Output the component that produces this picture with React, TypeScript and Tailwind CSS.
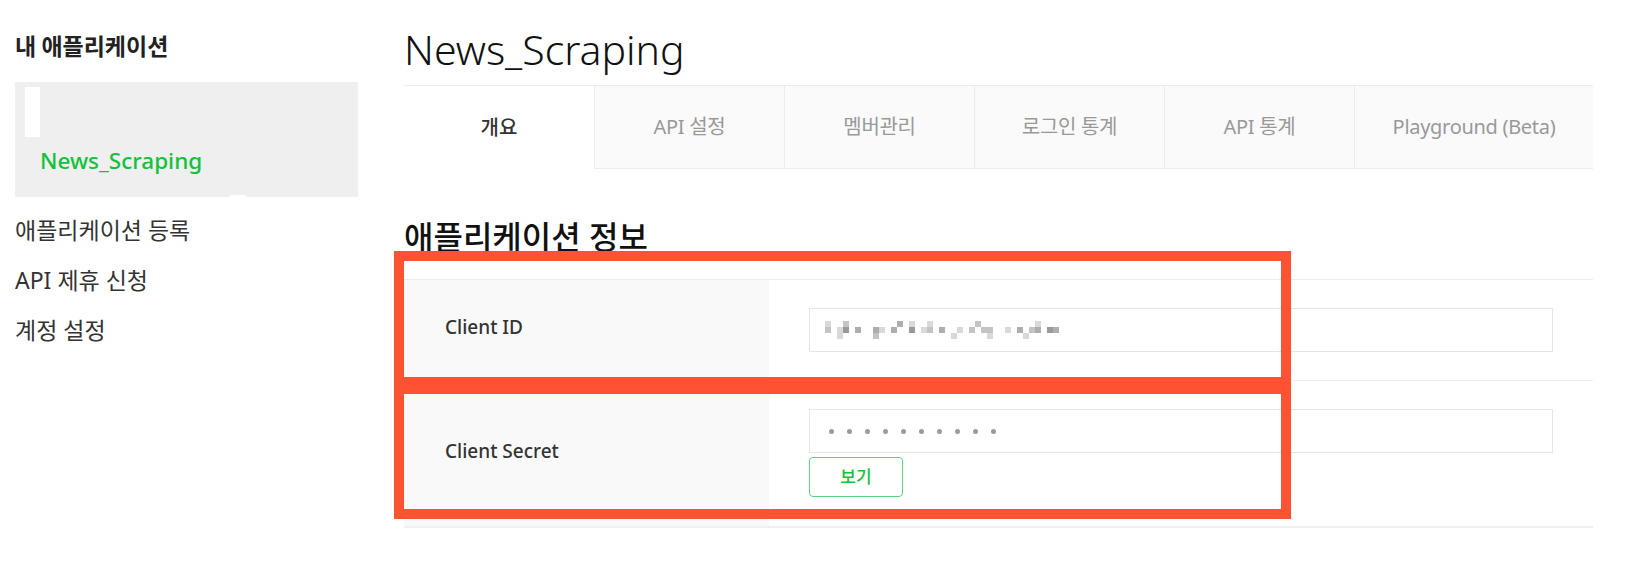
import React from "react";

const tabs = [
  { label: "개요", w: "w-[190px]", active: true },
  { label: "API 설정", w: "w-[190px]" },
  { label: "멤버관리", w: "w-[190px]" },
  { label: "로그인 통계", w: "w-[190px]" },
  { label: "API 통계", w: "w-[190px]" },
  { label: "Playground (Beta)", w: "w-[239px]" },
];

const mosaicRows = [
  "..1..2........3.1..1.......2.........1.....",
  "..2.14.3..31.3..4.12.3..1.2.22..1.3.23.43..",
  "....1.....2............1.....1.....1.......",
];
const shades: Record<string, string> = {
  "1": "#d9d9d9",
  "2": "#c4c4c4",
  "3": "#aeaeae",
  "4": "#9a9a9a",
};

function Mosaic() {
  const rects: React.ReactNode[] = [];
  mosaicRows.forEach((row, r) => {
    row.split("").forEach((ch, c) => {
      if (ch !== ".") {
        rects.push(
          <rect key={`${r}-${c}`} x={c * 6} y={r * 6} width={6} height={6} fill={shades[ch]} />
        );
      }
    });
  });
  return (
    <svg width={258} height={18} viewBox="0 0 258 18" className="block">
      {rects}
    </svg>
  );
}

export default function App() {
  return (
    <div className="relative flex w-[1642px] h-[562px] bg-white overflow-hidden font-['Noto_Sans','Noto_Sans_CJK_KR',sans-serif] text-[#333]">
      {/* Sidebar */}
      <aside className="ml-[15px] w-[343px] pt-[30px] shrink-0">
        <div className="text-[23px] leading-[30px] font-bold text-[#222] font-['Noto_Sans_CJK_KR','Noto_Sans',sans-serif]">
          내 애플리케이션
        </div>
        <div className="relative mt-[22px] h-[115px] bg-[#efefef] pt-[5px] pl-[10px]">
          <div className="w-[15px] h-[50px] bg-white" />
          <div className="mt-[9px] ml-[15px] text-[22.5px] leading-[30px] font-medium text-[#13c13b]">
            News_Scraping
          </div>
          <div className="absolute bottom-0 left-[215px] w-[16px] h-[2px] bg-white" />
        </div>
        <div className="mt-[8px] text-[23px] text-[#333]">
          <div className="h-[50px] leading-[50px]">애플리케이션 등록</div>
          <div className="h-[50px] leading-[50px]">API 제휴 신청</div>
          <div className="h-[50px] leading-[50px]">계정 설정</div>
        </div>
      </aside>

      {/* Main */}
      <main className="ml-[46px] w-[1189px] pt-[21px]">
        <h1 className="h-[56px] leading-[56px] text-[41px] font-light text-[#111] mb-[8px]">News_Scraping</h1>
        <div className="flex border-t border-[#ececec]">
          {tabs.map((t) =>
            t.active ? (
              <div
                key={t.label}
                className={`${t.w} h-[83px] flex items-center justify-center text-[20px] font-medium text-[#333] bg-white`}
              >
                {t.label}
              </div>
            ) : (
              <div
                key={t.label}
                className={`${t.w} h-[83px] flex items-center justify-center text-[20px] text-[#999] bg-[#fafafa] border-l border-b border-[#ececec] tracking-[-0.3px]`}
              >
                {t.label}
              </div>
            )
          )}
        </div>

        <h2 className="mt-[53px] h-[29px] leading-[29px] text-[32px] font-medium text-[#111]">
          애플리케이션 정보
        </h2>

        <div className="mt-[28px] border-t border-[#ececec]">
          {/* Client ID row */}
          <div className="flex h-[101px] border-b border-[#ececec]">
            <div className="w-[365px] bg-[#f9f9f9] flex items-center pl-[41px] pb-[5px] text-[19px] font-medium text-[#333]">
              Client ID
            </div>
            <div className="flex-1 flex items-center pl-[40px]">
              <div className="w-[744px] h-[44px] border border-[#e6e6e6] flex items-center pl-[3px]">
                <Mosaic />
              </div>
            </div>
          </div>
          {/* Client Secret row */}
          <div className="flex h-[147px] border-b-2 border-[#f0f0f0]">
            <div className="w-[365px] bg-[#f9f9f9] flex items-center pl-[41px] pb-[5px] text-[19px] font-medium text-[#333]">
              Client Secret
            </div>
            <div className="flex-1 pl-[40px] pt-[28px]">
              <div className="w-[744px] h-[44px] border border-[#e6e6e6] flex items-center pl-[19px] gap-[13px]">
                {Array.from({ length: 10 }).map((_, i) => (
                  <span key={i} className="block w-[5px] h-[5px] rounded-full bg-[#9a9a9a]" />
                ))}
              </div>
              <button className="mt-[4px] w-[94px] h-[40px] rounded-[4px] border border-[#5fd27c] bg-white text-[17px] font-medium text-[#14c13b] flex items-center justify-center">
                보기
              </button>
            </div>
          </div>
        </div>
      </main>

      {/* Red annotation boxes */}
      <div className="absolute left-[394px] top-[251px] w-[897px] h-[136px] border-[10px] border-[#fe5332] pointer-events-none" />
      <div className="absolute left-[394px] top-[384px] w-[897px] h-[135px] border-[10px] border-[#fe5332] pointer-events-none" />
    </div>
  );
}
